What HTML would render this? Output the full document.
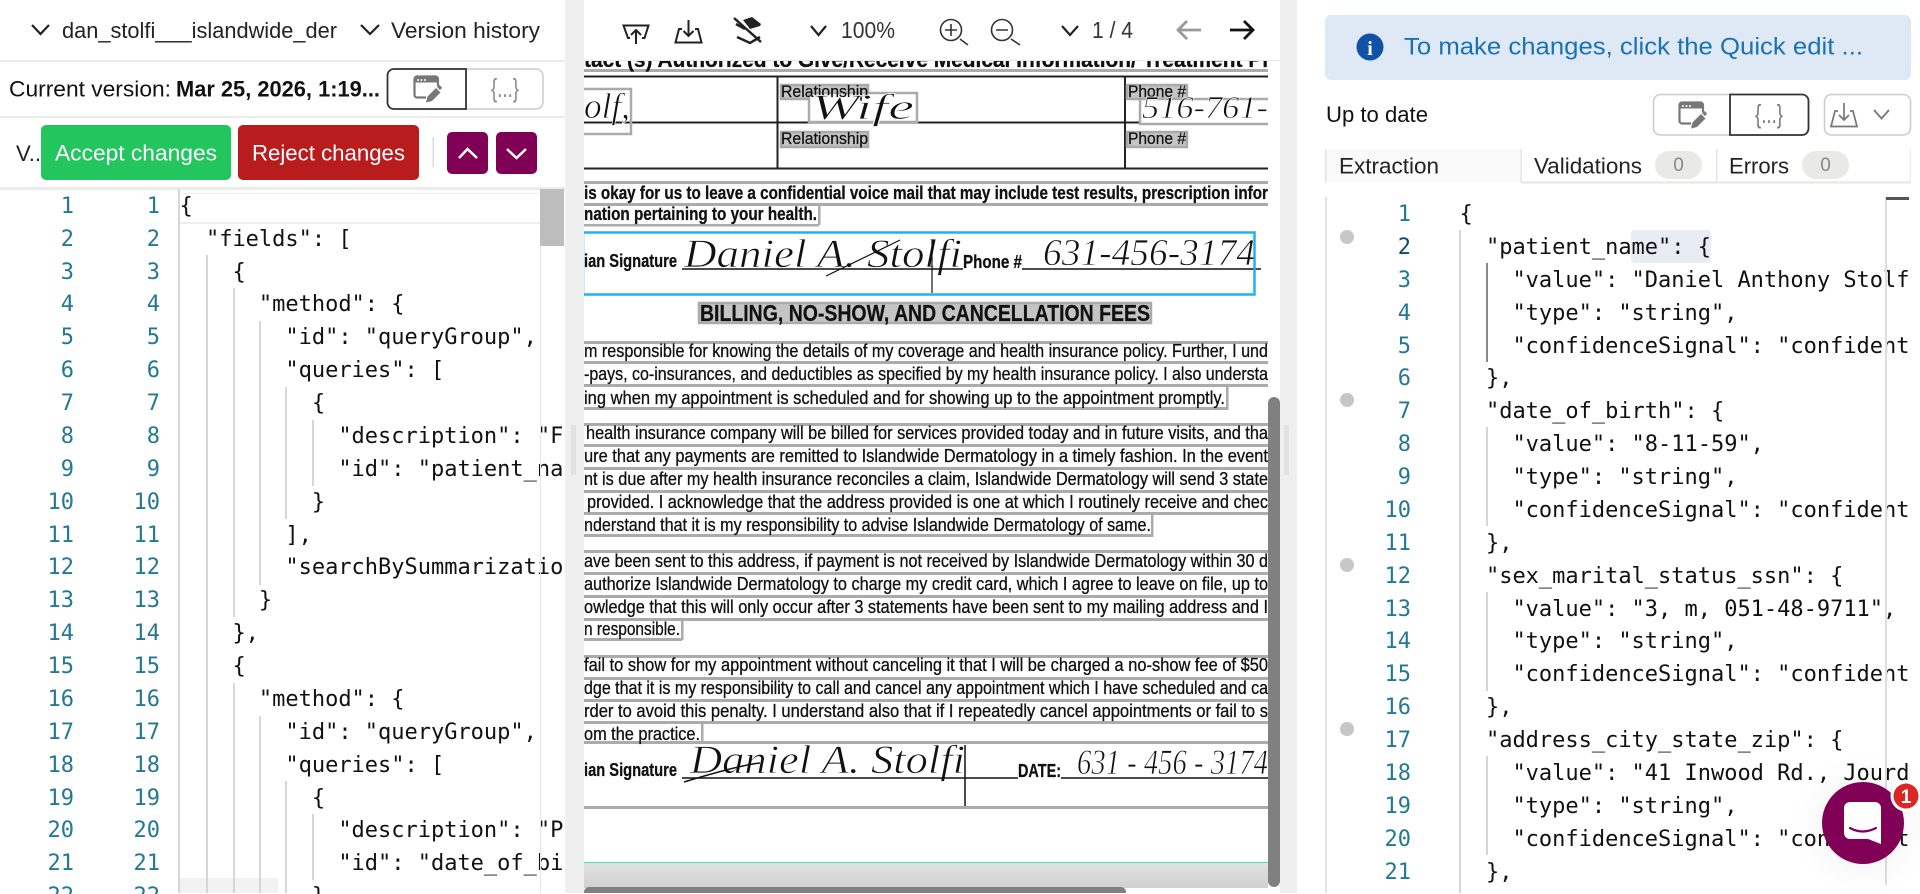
<!DOCTYPE html>
<html><head><meta charset="utf-8">
<style>
html,body{margin:0;padding:0;width:1920px;height:893px;overflow:hidden;background:#fff}
.a{position:absolute}
pre{position:absolute;margin:0;font:22px/32.88px "DejaVu Sans Mono","Liberation Mono",monospace;letter-spacing:-.01px;color:#111;overflow:hidden}
.n{color:#237893;text-align:right}
.g{position:absolute;width:1.5px;background:#d6d6d6}
svg{position:absolute;left:0;top:0}
</style></head>
<body>
<div class="a" style="left:565px;top:0;width:19px;height:893px;background:#efefef"></div>
<div class="a" style="left:1280px;top:0;width:17px;height:893px;background:#efefef"></div>
<div class="a" style="left:0;top:60px;width:565px;height:2px;background:#ebebeb"></div>
<div class="a" style="left:0;top:116px;width:565px;height:2px;background:#ebebeb"></div>
<div class="a" style="left:0;top:187px;width:565px;height:3px;background:#ececec"></div>

<!-- left editor -->
<div class="a" style="left:178px;top:193px;width:362px;height:28px;border-top:1px solid #eee;border-bottom:2px solid #eee"></div>
<div class="a" style="left:178px;top:878px;width:100px;height:15px;background:#f2f2f2"></div>
<div class="g" style="left:178px;top:189px;height:704px"></div>
<div class="g" style="left:206px;top:255px;height:638px"></div>
<div class="g" style="left:233px;top:288px;height:329px"></div>
<div class="g" style="left:259px;top:321px;height:264px"></div>
<div class="g" style="left:285px;top:387px;height:132px"></div>
<div class="g" style="left:312px;top:420px;height:66px"></div>
<div class="g" style="left:233px;top:683px;height:210px"></div>
<div class="g" style="left:259px;top:716px;height:177px"></div>
<div class="g" style="left:285px;top:781px;height:112px"></div>
<div class="g" style="left:312px;top:814px;height:66px"></div>
<pre class="n" style="left:20px;top:190.8px;width:54px;height:703px">1
2
3
4
5
6
7
8
9
10
11
12
13
14
15
16
17
18
19
20
21
22</pre>
<pre class="n" style="left:106px;top:190.8px;width:54px;height:703px">1
2
3
4
5
6
7
8
9
10
11
12
13
14
15
16
17
18
19
20
21
22</pre>
<pre style="left:179.500px;top:190.8px;width:383.500px;height:703px">{
  "fields": [
    {
      "method": {
        "id": "queryGroup",
        "queries": [
          {
            "description": "F
            "id": "patient_na
          }
        ],
        "searchBySummarizatio
      }
    },
    {
      "method": {
        "id": "queryGroup",
        "queries": [
          {
            "description": "P
            "id": "date_of_bi
          }</pre>
<div class="a" style="left:540px;top:190px;width:1px;height:703px;background:#e6e6e6"></div>
<div class="a" style="left:540px;top:189px;width:24px;height:57px;background:#bdbdbd"></div>

<!-- right editor -->
<div class="a" style="left:1631px;top:230px;width:80px;height:33px;background:#e8edf5;border-radius:4px"></div>
<div class="a" style="left:1325px;top:197px;width:1.5px;height:696px;background:#e4e4e4"></div>
<div class="g" style="left:1459px;top:230px;height:663px"></div>
<div class="g" style="left:1486px;top:263px;height:99px;background:#888"></div>
<div class="g" style="left:1486px;top:427px;height:99px"></div>
<div class="g" style="left:1486px;top:592px;height:99px"></div>
<div class="g" style="left:1486px;top:756px;height:99px"></div>
<pre class="n" style="left:1350px;top:199px;width:61px;height:694px">1
<span style="color:#0b4a6f">2</span>
3
4
5
6
7
8
9
10
11
12
13
14
15
16
17
18
19
20
21</pre>
<pre style="left:1459.500px;top:199px;width:450.500px;height:694px">{
  "patient_name": {
    "value": "Daniel Anthony Stolf
    "type": "string",
    "confidenceSignal": "confident
  },
  "date_of_birth": {
    "value": "8-11-59",
    "type": "string",
    "confidenceSignal": "confident
  },
  "sex_marital_status_ssn": {
    "value": "3, m, 051-48-9711",
    "type": "string",
    "confidenceSignal": "confident
  },
  "address_city_state_zip": {
    "value": "41 Inwood Rd., Jourd
    "type": "string",
    "confidenceSignal": "confident
  },</pre>
<div class="a" style="left:1885px;top:197px;width:1.5px;height:688px;background:#ddd"></div>
<div class="a" style="left:1886px;top:197px;width:23px;height:3px;background:#555"></div>

<svg width="1920" height="893" viewBox="0 0 1920 893" style="pointer-events:none">
<defs>
<clipPath id="doc"><rect x="584" y="61" width="684" height="801"/></clipPath>
<symbol id="win" viewBox="0 0 28 28" overflow="visible">
<path d="M25 11V4a2.500 2.500 0 0 0-2.500-2.500H4A2.500 2.500 0 0 0 1.500 4V20A2.500 2.500 0 0 0 4 22.500H13" fill="none" stroke="currentColor" stroke-width="2.200"/>
<path d="M2 2.500H25V7.500H2z" fill="currentColor"/>
<circle cx="5" cy="5" r="1" fill="#fff"/><circle cx="8.500" cy="5" r="1" fill="#fff"/><circle cx="12" cy="5" r="1" fill="#fff"/>
<path d="M13 27.500l1.500-6L23 13l4.500 4.500L19 26zM24 12l1.500-1.500a1 1 0 0 1 1.500 0L28.500 12a1 1 0 0 1 0 1.500L27 15z" fill="currentColor"/>
</symbol>
</defs>

<!-- document -->
<g clip-path="url(#doc)">
<g fill="#ababab">
<rect x="584" y="69" width="684" height="3"/>
<rect x="584" y="181" width="684" height="3"/><rect x="584" y="203" width="684" height="3"/>
<rect x="584" y="341" width="684" height="3"/><rect x="584" y="361" width="684" height="3"/><rect x="584" y="384" width="684" height="3"/><rect x="584" y="407" width="643" height="3"/>
<rect x="584" y="423" width="684" height="3"/><rect x="584" y="444" width="684" height="3"/><rect x="584" y="467" width="684" height="3"/><rect x="584" y="490" width="684" height="3"/><rect x="584" y="512" width="684" height="3"/><rect x="584" y="534" width="569" height="3"/>
<rect x="584" y="550" width="684" height="3"/><rect x="584" y="572" width="684" height="3"/><rect x="584" y="595" width="684" height="3"/><rect x="584" y="618" width="684" height="3"/><rect x="584" y="638" width="98" height="3"/>
<rect x="584" y="655" width="684" height="3"/><rect x="584" y="677" width="684" height="3"/><rect x="584" y="699" width="684" height="3"/><rect x="584" y="721" width="684" height="3"/><rect x="584" y="741" width="684" height="3"/>
<rect x="584" y="806" width="684" height="3"/>
<rect x="584" y="224" width="235" height="2.500"/>
<rect x="818" y="205" width="2.500" height="20"/><rect x="1226" y="386" width="2.500" height="24"/><rect x="1151" y="514" width="2.500" height="23"/><rect x="681" y="619" width="2.500" height="21"/><rect x="701" y="722" width="2.500" height="20"/>
</g>
<g font-family="Liberation Sans" font-weight="400" font-size="18.500" fill="#111" stroke="#111" stroke-width=".3" xml:space="preserve">
<text x="584" y="67" font-size="22" font-weight="700" textLength="684" lengthAdjust="spacingAndGlyphs">tact (s) Authorized to Give/Receive Medical Information/ Treatment Pl</text>
<text x="584" y="199" font-weight="700" textLength="684" lengthAdjust="spacingAndGlyphs">is okay for us to leave a confidential voice mail that may include test results, prescription infor</text>
<text x="584" y="220" font-weight="700" textLength="233" lengthAdjust="spacingAndGlyphs">nation pertaining to your health.</text>
<text x="584" y="357" textLength="684" lengthAdjust="spacingAndGlyphs">m responsible for knowing the details of my coverage and health insurance policy.  Further, I und</text>
<text x="584" y="380" textLength="684" lengthAdjust="spacingAndGlyphs">-pays, co-insurances, and deductibles as specified by my health insurance policy.  I also understa</text>
<text x="584" y="404" textLength="641" lengthAdjust="spacingAndGlyphs">ing when my appointment is scheduled and for showing up to the appointment promptly.</text>
<text x="586" y="439" textLength="682" lengthAdjust="spacingAndGlyphs">health insurance company will be billed for services provided today and in future visits, and tha</text>
<text x="584" y="462" textLength="684" lengthAdjust="spacingAndGlyphs">ure that any payments are remitted to Islandwide Dermatology in a timely fashion.  In the event</text>
<text x="584" y="485" textLength="684" lengthAdjust="spacingAndGlyphs">nt is due after my health insurance reconciles a claim, Islandwide Dermatology will send 3 state</text>
<text x="587" y="508" textLength="681" lengthAdjust="spacingAndGlyphs">provided.  I acknowledge that the address provided is one at which I routinely receive and chec</text>
<text x="584" y="531" textLength="567" lengthAdjust="spacingAndGlyphs">nderstand that it is my responsibility to advise Islandwide Dermatology of same.</text>
<text x="584" y="567" textLength="684" lengthAdjust="spacingAndGlyphs">ave been sent to this address, if payment is not received by Islandwide Dermatology within 30 d</text>
<text x="584" y="590" textLength="684" lengthAdjust="spacingAndGlyphs">authorize Islandwide Dermatology to charge my credit card, which I agree to leave on file, up to</text>
<text x="584" y="613" textLength="684" lengthAdjust="spacingAndGlyphs">owledge that this will only occur after 3 statements have been sent to my mailing address and I</text>
<text x="584" y="635" textLength="96" lengthAdjust="spacingAndGlyphs">n responsible.</text>
<text x="584" y="671" textLength="684" lengthAdjust="spacingAndGlyphs">fail to show for my appointment without canceling it that I will be charged a no-show fee of $50</text>
<text x="584" y="694" textLength="684" lengthAdjust="spacingAndGlyphs">dge that it is my responsibility to call and cancel any appointment which I have scheduled and ca</text>
<text x="584" y="717" textLength="684" lengthAdjust="spacingAndGlyphs">rder to avoid this penalty.  I understand also that if I repeatedly cancel appointments or fail to s</text>
<text x="584" y="740" textLength="116" lengthAdjust="spacingAndGlyphs">om the practice.</text>
<text x="584" y="267" font-weight="700" textLength="93" lengthAdjust="spacingAndGlyphs">ian Signature</text>
<text x="963" y="268" font-weight="700" textLength="59" lengthAdjust="spacingAndGlyphs">Phone #</text>
<text x="584" y="776" font-weight="700" textLength="93" lengthAdjust="spacingAndGlyphs">ian Signature</text>
<text x="1018" y="777" font-weight="700" textLength="43" lengthAdjust="spacingAndGlyphs">DATE:</text>
</g>
<!-- table -->
<g stroke="#222" fill="none">
<path d="M584 76.500H1268" stroke-width="2"/><path d="M584 122.500H1268" stroke-width="2"/><path d="M584 168.500H1268" stroke-width="2"/>
<path d="M777.500 76V169M1125 76V169" stroke-width="2"/>
</g>
<g fill="#c4c4c4" stroke="#aaa" stroke-width="2.500">
<rect x="781" y="85" width="87" height="14"/><rect x="781" y="132" width="87" height="15"/><rect x="1127" y="85" width="60" height="14"/><rect x="1127" y="132" width="60" height="15"/>
<rect x="699" y="303" width="452" height="20"/>
</g>
<g fill="none" stroke="#aaa" stroke-width="2.500">
<path d="M584 89H631V134H584"/>
<rect x="809" y="93" width="108" height="29" fill="#fff"/>
<path d="M1268 99H1140V124H1268" fill="#fff"/>
</g>
<g font-family="Liberation Sans" font-size="16.500" fill="#111" stroke="#111" stroke-width=".25" xml:space="preserve">
<text x="781" y="97" textLength="87" lengthAdjust="spacingAndGlyphs">Relationship</text>
<text x="781" y="144" textLength="87" lengthAdjust="spacingAndGlyphs">Relationship</text>
<text x="1128" y="97" textLength="58" lengthAdjust="spacingAndGlyphs">Phone #</text>
<text x="1128" y="144" textLength="58" lengthAdjust="spacingAndGlyphs">Phone #</text>
<text x="700" y="321" font-size="23" font-weight="700" textLength="450" lengthAdjust="spacingAndGlyphs">BILLING, NO-SHOW, AND CANCELLATION FEES</text>
</g>
<!-- handwriting -->
<g font-family="Liberation Serif" font-style="italic" fill="#111" stroke="#fff" stroke-width=".7">
<text x="584" y="118" font-size="36" textLength="46" lengthAdjust="spacingAndGlyphs">olf,</text>
<text x="811" y="119" font-size="36" textLength="103" lengthAdjust="spacingAndGlyphs">Wife</text>
<text x="1142" y="118" font-size="32" textLength="126" lengthAdjust="spacingAndGlyphs">516-761-</text>
<text x="684" y="267" font-size="40" textLength="278" lengthAdjust="spacingAndGlyphs">Daniel A. Stolfi</text>
<text x="1043" y="265" font-size="38" textLength="212" lengthAdjust="spacingAndGlyphs">631-456-3174</text>
<text x="690" y="773" font-size="40" textLength="275" lengthAdjust="spacingAndGlyphs">Daniel A. Stolfi</text>
<text x="1077" y="774" font-size="36" textLength="191" lengthAdjust="spacingAndGlyphs">631 - 456 - 3174</text>
</g>
<g stroke="#111" fill="none">
<path d="M682 269H963M1022 269H1261" stroke-width="1.500"/>
<path d="M682 778H1018M1061 778H1268" stroke-width="1.500"/>
<path d="M826 276Q880 250 900 240M932 240V293" stroke-width="1.200"/>
<path d="M684 782Q740 765 760 763M965 745V806" stroke-width="1.500"/>
</g>
<rect x="583" y="232.500" width="671.500" height="62" fill="none" stroke="#1fb0f5" stroke-width="2.500"/>
</g>
<rect x="584" y="862" width="684" height="1.500" fill="#2fe8b4"/>
<defs><linearGradient id="gr" x1="0" y1="0" x2="0" y2="1"><stop offset="0" stop-color="#e2e2e2"/><stop offset="1" stop-color="#d0d0d0"/></linearGradient></defs>
<rect x="584" y="863" width="684" height="25" fill="url(#gr)"/>
<rect x="584" y="887" width="542" height="10" rx="5" fill="#808080"/>
<rect x="1268" y="397" width="12" height="490" rx="6" fill="#808080"/>
<g fill="#dcdcdc">
<rect x="571" y="425" width="5" height="50" fill="#e2e2e2"/><rect x="1284" y="425" width="5" height="50" fill="#e2e2e2"/>
</g>

<!-- center toolbar -->
<rect x="584" y="0" width="696" height="61" fill="#fff"/>
<rect x="584" y="60" width="696" height="1" fill="#e8e8e8"/>
<g fill="none" stroke="#222" stroke-width="2">
<path d="M630 38H628L623.500 25.500H648.500L644.500 38H642M636 44V30M631 35L636 30L641 35"/>
<path d="M682 29H679L675.500 42.500H701.500L698 29H695M688.500 20V36M683.500 31L688.500 36L693.500 31"/>
<path d="M734 18L761 42" stroke-width="2.500"/>
<path d="M743 20L752 17L761 24L760 26L750 29Z" fill="#222" stroke="none"/>
<path d="M736 24L745 29M737 37L750 43L760 37" stroke-width="2.500"/>
<path d="M811 26L818.500 35L826 26M1062 26L1070 35L1078 26" stroke-width="2.200"/>
<g stroke="#333" stroke-width="1.600">
<circle cx="951" cy="30" r="10.500"/><path d="M945 30H957M951 24V36M960 39L968 45"/>
<circle cx="1002" cy="30" r="10.500"/><path d="M996 30H1008M1011 39L1020 45"/>
</g>
<path d="M1178 30H1201M1187 21L1178 30L1187 39" stroke="#999" stroke-width="2.800"/>
<path d="M1230 30H1253M1244 21L1253 30L1244 39" stroke="#111" stroke-width="2.800"/>
</g>
<g font-family="Liberation Sans" font-size="23" fill="#333">
<text x="841" y="38" textLength="54" lengthAdjust="spacingAndGlyphs">100%</text>
<text x="1092" y="38" textLength="41" lengthAdjust="spacingAndGlyphs" xml:space="preserve">1 / 4</text>
</g>

<!-- left header -->
<g font-family="Liberation Sans" font-size="22.500" fill="#222">
<path d="M32 25L40.500 34L49 25M361 25L370 34L379 25" fill="none" stroke="#222" stroke-width="2.200"/>
<text x="62" y="38" textLength="275" lengthAdjust="spacingAndGlyphs">dan_stolfi___islandwide_der</text>
<text x="391" y="38" textLength="149" lengthAdjust="spacingAndGlyphs">Version history</text>
<text x="9" y="96.500" fill="#111" font-size="22" textLength="162" lengthAdjust="spacingAndGlyphs">Current version:</text>
<text x="176" y="96.500" fill="#111" font-size="22" font-weight="700" textLength="204" lengthAdjust="spacingAndGlyphs">Mar 25, 2026, 1:19...</text>
<text x="16" y="161" textLength="25" lengthAdjust="spacingAndGlyphs">V..</text>
</g>
<rect x="388" y="69" width="155" height="40" rx="7" fill="#fff" stroke="#ccc" stroke-width="1.500"/>
<path d="M466 69H394a6.500 6.500 0 0 0-6.500 6.500V102.500a6.500 6.500 0 0 0 6.500 6.500H466Z" fill="#fff" stroke="#333" stroke-width="1.800"/>
<use href="#win" x="413" y="75" width="28" height="28" color="#777"/>
<text x="491" y="97" font-family="Liberation Sans" font-size="26" fill="#888" textLength="28" lengthAdjust="spacingAndGlyphs">{...}</text>
<rect x="41" y="125" width="190" height="55" rx="5" fill="#22c55e"/>
<rect x="238" y="125" width="181" height="55" rx="5" fill="#b91c1c"/>
<g font-family="Liberation Sans" font-size="22.500" fill="#fff">
<text x="55" y="160.500" textLength="162" lengthAdjust="spacingAndGlyphs">Accept changes</text>
<text x="252" y="160.500" textLength="153" lengthAdjust="spacingAndGlyphs">Reject changes</text>
</g>
<rect x="432.500" y="137" width="1.500" height="30" fill="#ddd"/>
<rect x="447" y="132" width="41" height="42" rx="5" fill="#7f0055"/>
<rect x="496" y="132" width="41" height="42" rx="5" fill="#7f0055"/>
<path d="M459 158L467.500 149L477 158M507 149L516.500 158L526 149" fill="none" stroke="#fff" stroke-width="2.500"/>

<!-- right header -->
<rect x="1325" y="15" width="586" height="65" rx="6" fill="#dfe9f6"/>
<circle cx="1370" cy="47" r="13.500" fill="#0f52a8"/>
<text x="1370" y="55" text-anchor="middle" font-family="Liberation Serif" font-weight="700" font-size="20" fill="#fff">i</text>
<text x="1404" y="54.500" font-family="Liberation Sans" font-size="24.500" fill="#1a72b4" textLength="459" lengthAdjust="spacingAndGlyphs">To make changes, click the Quick edit ...</text>
<text x="1326" y="122" font-family="Liberation Sans" font-size="22.500" fill="#111" textLength="102" lengthAdjust="spacingAndGlyphs">Up to date</text>
<rect x="1653.500" y="94.500" width="155" height="40.500" rx="7" fill="#fff" stroke="#ccc" stroke-width="1.500"/>
<path d="M1730 94.500H1802a6.500 6.500 0 0 1 6.500 6.500V128.500a6.500 6.500 0 0 1-6.500 6.500H1730Z" fill="#fff" stroke="#333" stroke-width="1.800"/>
<use href="#win" x="1678" y="101" width="28" height="28" color="#777"/>
<text x="1755" y="123" font-family="Liberation Sans" font-size="26" fill="#777" textLength="28" lengthAdjust="spacingAndGlyphs">{...}</text>
<rect x="1824.500" y="94.500" width="86" height="40.500" rx="7" fill="#fff" stroke="#ccc" stroke-width="1.500"/>
<path d="M1838 111H1835L1831 126.500H1857L1853 111H1850M1844 103V120M1839 115L1844 120L1849 115" fill="none" stroke="#777" stroke-width="1.700"/>
<path d="M1874 110L1881.500 118.500L1889 110" fill="none" stroke="#777" stroke-width="1.800"/>

<rect x="1325" y="149" width="196" height="34" fill="#fafafa"/>
<rect x="1325" y="149" width="1.500" height="34" fill="#e4e4e4"/>
<rect x="1521" y="181.500" width="390" height="2" fill="#e6e6e2"/>
<rect x="1520.500" y="149" width="1.500" height="34" fill="#e6e6e6"/>
<rect x="1716" y="149" width="1.500" height="34" fill="#e6e6e6"/>
<rect x="1909.500" y="149" width="1.500" height="34" fill="#eee"/>
<g font-family="Liberation Sans" font-size="22.500" fill="#222">
<text x="1339" y="173.500" textLength="100" lengthAdjust="spacingAndGlyphs">Extraction</text>
<text x="1534" y="173.500" textLength="108" lengthAdjust="spacingAndGlyphs">Validations</text>
<text x="1729" y="173.500" textLength="60" lengthAdjust="spacingAndGlyphs">Errors</text>
</g>
<rect x="1655" y="151" width="47" height="28" rx="14" fill="#e9e9e6"/>
<rect x="1802" y="151" width="47" height="28" rx="14" fill="#e9e9e6"/>
<g font-family="Liberation Sans" font-size="19" fill="#888" text-anchor="middle">
<text x="1678.500" y="171">0</text><text x="1825.500" y="171">0</text>
</g>
<g fill="#c6c6c6">
<ellipse cx="1347" cy="237" rx="7" ry="7"/><ellipse cx="1347" cy="400" rx="7" ry="7"/><ellipse cx="1347" cy="565" rx="7" ry="7"/><ellipse cx="1347" cy="729" rx="7" ry="7"/>
</g>
</svg>

<!-- chat bubble -->
<div class="a" style="left:1822px;top:782px;width:82px;height:82px;border-radius:50%;background:#7f0055;box-shadow:0 2px 40px rgba(0,0,0,.07)"></div>
<svg width="1920" height="893" viewBox="0 0 1920 893">
<path d="M1850 802H1875a6 6 0 0 1 6 6V844L1868 839H1850a6 6 0 0 1-6-6V808a6 6 0 0 1 6-6Z" fill="#fff"/>
<path d="M1850 828Q1862.500 835 1876 828" fill="none" stroke="#7f0055" stroke-width="2.200" stroke-linecap="round"/>
<circle cx="1906" cy="796" r="15.500" fill="#fff"/>
<circle cx="1906" cy="796" r="12.500" fill="#dc2626"/>
<text x="1906" y="803" text-anchor="middle" font-family="Liberation Sans" font-weight="700" font-size="19" fill="#fff">1</text>
</svg>
</body></html>
